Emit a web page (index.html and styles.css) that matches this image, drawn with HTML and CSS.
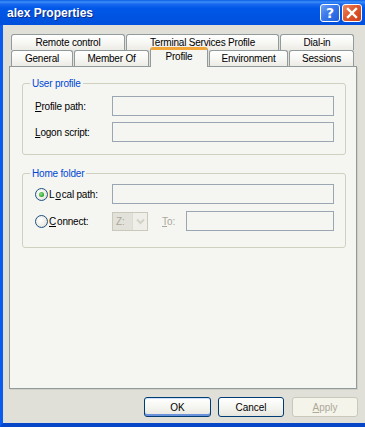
FILE: index.html
```html
<!DOCTYPE html>
<html>
<head>
  <title>alex Properties</title>
  <meta charset="UTF-8"/>
  <link rel="stylesheet" href="styles.css">
</head>
<body>

  <div class="window">
    <div class="titlebar">
      <span class="title">alex Properties</span>
      <div class="caption-buttons">
        <span class="cap-btn help">?</span>
        <span class="cap-btn close">
          <svg width="12" height="12" viewBox="0 0 12 12">
            <path d="M2 2 L10 10 M10 2 L2 10" stroke="#fff" stroke-width="2.4" stroke-linecap="square"/>
          </svg>
        </span>
      </div>
    </div>

    <div class="client">
      <div class="tabs">
        <div class="tab-row">
          <div class="tab w-remote">Remote control</div>
          <div class="tab w-terminal">Terminal Services Profile</div>
          <div class="tab w-dialin">Dial-in</div>
        </div>
        <div class="tab-row">
          <div class="tab w-general">General</div>
          <div class="tab w-member">Member Of</div>
          <div class="tab w-profile active">Profile</div>
          <div class="tab w-env">Environment</div>
          <div class="tab w-sessions">Sessions</div>
        </div>
      </div>

      <div class="panel">
        <fieldset class="group group-user">
          <legend>User profile</legend>
          <div class="form-grid user-grid">
            <label><u>P</u>rofile path:</label>
            <div class="textbox"></div>
            <label><u>L</u>ogon script:</label>
            <div class="textbox"></div>
          </div>
        </fieldset>

        <fieldset class="group group-home">
          <legend>Home folder</legend>
          <div class="form-grid home-grid">
            <div class="radio-label"><span class="radio checked"></span>L<u>o</u>cal path:</div>
            <div class="textbox"></div>
            <div class="radio-label"><span class="radio"></span><u>C</u>onnect:</div>
            <div class="connect-row">
              <div class="combo disabled">
                <span class="combo-value">Z:</span>
                <span class="combo-arrow">
                  <svg width="9" height="7" viewBox="0 0 9 7">
                    <path d="M1 1.5 L4.5 5 L8 1.5" fill="none" stroke="#d4d2c6" stroke-width="2"/>
                  </svg>
                </span>
              </div>
              <span class="to-label"><u>T</u>o:</span>
              <div class="textbox"></div>
            </div>
          </div>
        </fieldset>
      </div>

      <div class="button-row">
        <button class="btn default">OK</button>
        <button class="btn cancel">Cancel</button>
        <button class="btn apply" disabled><u>A</u>pply</button>
      </div>
    </div>
  </div>

</body>
</html>
```

FILE: styles.css
```css
body {
  margin: 0;
  font-family: "Liberation Sans", Arial, sans-serif;
  font-size: 10px;
  background: #e0dfd8;
}

.window {
  width: 365px;
  height: 427px;
  display: flex;
  flex-direction: column;
  overflow: hidden;
}

/* title bar */
.titlebar {
  height: 25px;
  flex: none;
  display: flex;
  align-items: center;
  justify-content: space-between;
  padding-left: 7px;
  background: linear-gradient(to bottom, #0a5de8 0, #3d8ef7 2px, #1a6af0 4px, #0058e8 8px, #0054e3 60%, #0050dc 100%);
}

.title {
  color: #fff;
  font-weight: bold;
  font-size: 12px;
  text-shadow: 1px 1px 0 #0a2a8a;
  margin-top: 1px;
}

.caption-buttons {
  display: flex;
  gap: 2px;
  margin-right: 3px;
}

.cap-btn {
  width: 18px;
  height: 16px;
  border: 1px solid #fff;
  border-radius: 3px;
  display: flex;
  align-items: center;
  justify-content: center;
}

.help {
  background: linear-gradient(135deg, #6ea0f5 0, #3a78ea 45%, #1f5fdc 100%);
  color: #fff;
  font-weight: bold;
  font-size: 14px;
  font-family: "DejaVu Sans", sans-serif;
}

.close {
  background: linear-gradient(135deg, #f08a62 0, #e0582c 45%, #c9401a 100%);
}

/* dialog body */
.client {
  flex: 1;
  border-left: 3px solid #0a5cf0;
  border-bottom: 4px solid #0846c8;
  padding: 9px 8px 0 6px;
  background: #e0dfd8;
}

.tabs {
  margin-left: 2px;
}

.tab-row {
  display: flex;
  gap: 1px;
  height: 16px;
  align-items: flex-end;
}

.tab {
  box-sizing: border-box;
  height: 16px;
  border: 1px solid #919b9c;
  border-bottom: none;
  border-radius: 3px 3px 0 0;
  background: linear-gradient(to bottom, #ffffff 0, #f7f7f4 50%, #ecebe5 100%);
  text-align: center;
  line-height: 15px;
  color: #000;
  letter-spacing: -0.2px;
  white-space: nowrap;
}

.tab.active {
  height: 20px;
  margin-bottom: -1px;
  position: relative;
  z-index: 1;
  background: #f5f6f2;
  border-top: 3px solid #f2a637;
  line-height: 14px;
}

.w-remote { width: 114px; }
.w-terminal { width: 153px; }
.w-dialin { width: 74px; }
.w-general { width: 62px; }
.w-member { width: 75px; }
.w-profile { width: 58px; }
.w-env { width: 79px; }
.w-sessions { width: 65px; }

.panel {
  box-sizing: border-box;
  height: 323px;
  border: 1px solid #919b9c;
  background: #f5f6f2;
  padding: 10px 10px 0 12px;
  box-shadow: 1px 1px 0 #d0cfc6;
}

.group {
  margin: 0;
  min-width: 0;
  border: 1px solid #d0d0bf;
  border-radius: 3px;
  padding: 6px 11px 12px 12px;
}

.group legend {
  color: #0046d5;
  line-height: 13px;
  padding: 0 2px;
  margin-left: -5px;
  letter-spacing: -0.2px;
}

.group-home {
  margin-top: 12px;
  padding: 4px 11px 16px 12px;
}

.form-grid {
  display: grid;
  grid-template-columns: 77px 222px;
  align-items: center;
}

.user-grid {
  row-gap: 6px;
}

.home-grid {
  row-gap: 7px;
}

.form-grid label,
.radio-label {
  letter-spacing: -0.2px;
  color: #000;
}

.textbox {
  box-sizing: border-box;
  height: 20px;
  border: 1px solid #9aa6b2;
  background: #f5f6f2;
}

.radio-label {
  display: flex;
  align-items: center;
  gap: 1px;
}

.radio {
  box-sizing: border-box;
  width: 13px;
  height: 13px;
  border: 1px solid #1c5180;
  border-radius: 50%;
  background: radial-gradient(circle at 40% 40%, #ffffff 0, #f0efe9 50%, #d8d6cc 100%);
  display: flex;
  align-items: center;
  justify-content: center;
}

.radio.checked::after {
  content: "";
  width: 5px;
  height: 5px;
  border-radius: 50%;
  background: radial-gradient(circle at 40% 40%, #8ee38e 0, #21a121 70%);
}

.connect-row {
  display: flex;
  align-items: center;
}

.combo {
  box-sizing: border-box;
  width: 36px;
  height: 19px;
  border: 1px solid #cac8bb;
  display: flex;
  background: #f5f6f2;
}

.combo-value {
  flex: 1;
  background: #e2e1da;
  color: #aca899;
  line-height: 17px;
  padding-left: 3px;
}

.combo-arrow {
  width: 14px;
  background: #efeee8;
  border-left: 1px solid #dedcd2;
  display: flex;
  align-items: center;
  justify-content: center;
}

.to-label {
  width: 24px;
  margin-left: 14px;
  color: #aca899;
}

.connect-row .textbox {
  flex: 1;
}

/* bottom buttons */
.button-row {
  display: flex;
  justify-content: flex-end;
  margin-top: 8px;
  margin-right: -1px;
}

.btn {
  box-sizing: border-box;
  width: 66px;
  height: 20px;
  margin: 0 0 0 7px;
  padding: 0;
  font-family: "Liberation Sans", Arial, sans-serif;
  font-size: 10px;
  color: #000;
  border: 1px solid #003c74;
  border-radius: 3px;
  background: linear-gradient(to bottom, #ffffff 0, #f3f3ee 60%, #e6e5dd 100%);
}

.btn.default {
  width: 67px;
  box-shadow: inset 0 -2px 0 #6a93dc, inset 0 1px 0 #cfe0fb;
}

.btn.apply {
  margin-left: 8px;
  border-color: #cac8bb;
  background: #f5f4ea;
  color: #aca899;
}
```
